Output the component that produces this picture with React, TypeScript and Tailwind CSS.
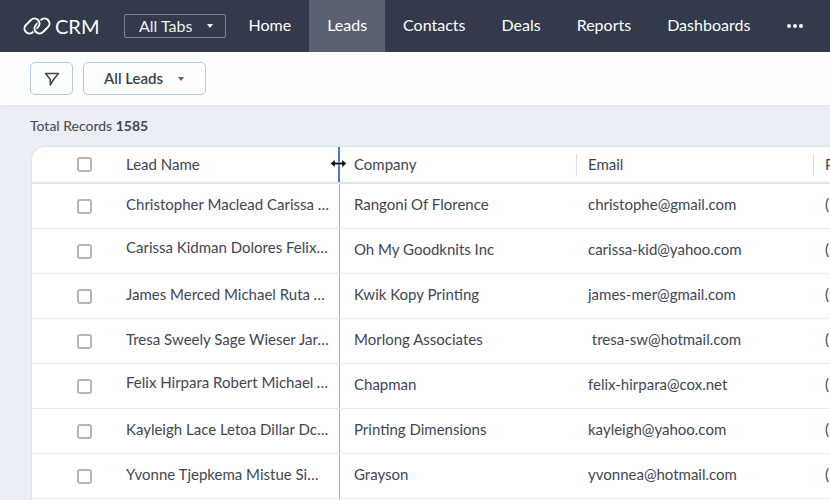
import React from 'react'

const navItems = ['Home', 'Leads', 'Contacts', 'Deals', 'Reports', 'Dashboards']

const rows = [
  { name: 'Christopher Maclead Carissa Kidman', nudge: '', company: 'Rangoni Of Florence', email: 'christophe@gmail.com', phone: '(555) 555-5555' },
  { name: 'Carissa Kidman Dolores Felix Hirpara', nudge: '-translate-y-[2px]', company: 'Oh My Goodknits Inc', email: 'carissa-kid@yahoo.com', phone: '(555) 555-5555' },
  { name: 'James Merced Michael Ruta Tresa', nudge: '', company: 'Kwik Kopy Printing', email: 'james-mer@gmail.com', phone: '(555) 555-5555' },
  { name: 'Tresa Sweely Sage Wieser Jar Kim', nudge: '', company: 'Morlong Associates', email: ' tresa-sw@hotmail.com', phone: '(555) 555-5555' },
  { name: 'Felix Hirpara Robert Michael Jones', nudge: '-translate-y-[2px]', company: 'Chapman', email: 'felix-hirpara@cox.net', phone: '(555) 555-5555' },
  { name: 'Kayleigh Lace Letoa Dillar Dc Smith', nudge: '', company: 'Printing Dimensions', email: 'kayleigh@yahoo.com', phone: '(555) 555-5555' },
  { name: 'Yvonne Tjepkema Mistue Simon Tagg', nudge: '', company: 'Grayson', email: 'yvonnea@hotmail.com', phone: '(555) 555-5555' },
  { name: 'Mitsue Tollner Lenna Paprocki', nudge: '', company: 'Morlong', email: 'mitsue@gmail.com', phone: '(555) 555-5555' },
]

const gridCols = 'grid grid-cols-[94px_214px_237px_237px_100px]'

function Caret({ className }: { className: string }): JSX.Element {
  return <span className={`w-0 h-0 border-x-[3.5px] border-x-transparent border-t-[4px] ${className}`} />
}

function Checkbox(): JSX.Element {
  return <span className="block w-[15px] h-[15px] rounded-[3px] border-2 border-[#b4b6bb] bg-white" />
}

function Logo(): JSX.Element {
  const left = { x: 0.5, y: 4, width: 17, height: 10, rx: 5, transform: 'rotate(-45 9 9)' }
  const right = { x: 10.5, y: 4, width: 17, height: 10, rx: 5, transform: 'rotate(-45 19 9)' }
  return (
    <svg width="28" height="18" viewBox="0 0 28 18" fill="none" strokeWidth="2" className="overflow-visible">
      <defs>
        <clipPath id="logo-top">
          <rect x="0" y="-2" width="28" height="11" />
        </clipPath>
      </defs>
      <rect {...left} stroke="#fff" />
      <rect {...right} stroke="#323a4c" strokeWidth="4" />
      <rect {...right} stroke="#fff" />
      <g clipPath="url(#logo-top)">
        <rect {...left} stroke="#323a4c" strokeWidth="4" />
        <rect {...left} stroke="#fff" />
      </g>
    </svg>
  )
}

export default function App(): JSX.Element {
  return (
    <div className="w-[830px] h-[500px] overflow-hidden bg-[#ebeef4] text-[#414653] font-['Lato',sans-serif]">
      {/* Top nav */}
      <nav className="h-[52px] bg-[#323a4c] flex items-center text-white">
        <div className="flex items-center ml-[23px] w-[101px]">
          <Logo />
          <span className="ml-[4px] text-[20px] leading-none">CRM</span>
        </div>
        <button className="w-[102px] h-[24px] rounded-[2px] border border-[#7b8190] flex items-center pl-[14px] text-[16px] text-[#eef0f3]">
          All Tabs
          <Caret className="ml-[15px] border-t-white" />
        </button>
        <ul className="flex h-full ml-[4.5px] text-[16px]">
          {navItems.map((item) => (
            <li
              key={item}
              className={`h-full flex items-center px-[18px] pb-[2px] ${item === 'Leads' ? 'bg-[#5b6170]' : ''}`}
            >
              {item}
            </li>
          ))}
        </ul>
        <span className="pl-[19px] flex gap-[2px]">
          <span className="w-[4px] h-[4px] rounded-full bg-white" />
          <span className="w-[4px] h-[4px] rounded-full bg-white" />
          <span className="w-[4px] h-[4px] rounded-full bg-white" />
        </span>
      </nav>

      {/* Toolbar */}
      <div className="h-[53px] bg-[#fdfefe] shadow-[0_1px_3px_rgba(60,70,90,0.08)] flex items-center pl-[30px] gap-[10px]">
        <button className="w-[43px] h-[33px] rounded-[5px] border border-[#b5c8dc] flex items-center justify-center">
          <svg width="16" height="16" viewBox="0 0 16 16" fill="none" stroke="#3f4452" strokeWidth="1.5" strokeLinejoin="round">
            <path d="M1.5 2.5H14.5L9.8 8L6.3 14V8.5Z" />
          </svg>
        </button>
        <button className="w-[123px] h-[33px] rounded-[5px] border border-[#b5c8dc] flex items-center pl-[20px] text-[15px] font-semibold text-[#3a3f4d]">
          All Leads
          <Caret className="ml-[15px] border-t-[#5a5f6b]" />
        </button>
      </div>

      <div className="h-[41px] pl-[30px] pt-[13px] text-[14px] leading-[16px]">
        Total Records <span className="font-bold">1585</span>
      </div>

      {/* Table */}
      <div className="relative ml-[31px] bg-white border-l border-t border-[#dbe4ee] rounded-tl-[14px]">
        <div className={`${gridCols} h-[37px] border-b-2 border-[#dbe4ee] text-[15px] items-center`}>
          <div className="flex justify-center pl-[10px]"><Checkbox /></div>
          <div className="h-full flex items-center border-r-2 border-[#4a7bc8]">Lead Name</div>
          <div className="pl-[14px] h-[22px] flex items-center border-r border-[#d5dfe9]">Company</div>
          <div className="pl-[11px] h-[22px] flex items-center border-r border-[#d5dfe9]">Email</div>
          <div className="pl-[11px]">Phone</div>
        </div>
        {rows.map((row) => (
          <div key={row.email} className={`${gridCols} h-[45px] border-b border-[#e9edf3] text-[15px] items-center`}>
            <div className="flex justify-center pl-[10px]"><Checkbox /></div>
            <div className="h-full flex items-center border-r border-[#a9adb5] pr-[9px] min-w-0">
              <span className={`truncate pb-[3px] ${row.nudge}`}>{row.name}</span>
            </div>
            <div className="pl-[14px] truncate pb-[3px]">{row.company}</div>
            <div className="pl-[11px] whitespace-pre pb-[3px]">{row.email}</div>
            <div className="pl-[11px] whitespace-nowrap pb-[3px]">{row.phone}</div>
          </div>
        ))}

        {/* Column resize cursor */}
        <svg className="absolute left-[298px] top-[11px]" width="17" height="11" viewBox="0 0 17 11">
          <path d="M0.5 5.5L5 1.5V4.2H12V1.5L16.5 5.5L12 9.5V6.8H5V9.5Z" fill="#111" stroke="#fff" strokeWidth="0.5" />
        </svg>
      </div>
    </div>
  )
}
